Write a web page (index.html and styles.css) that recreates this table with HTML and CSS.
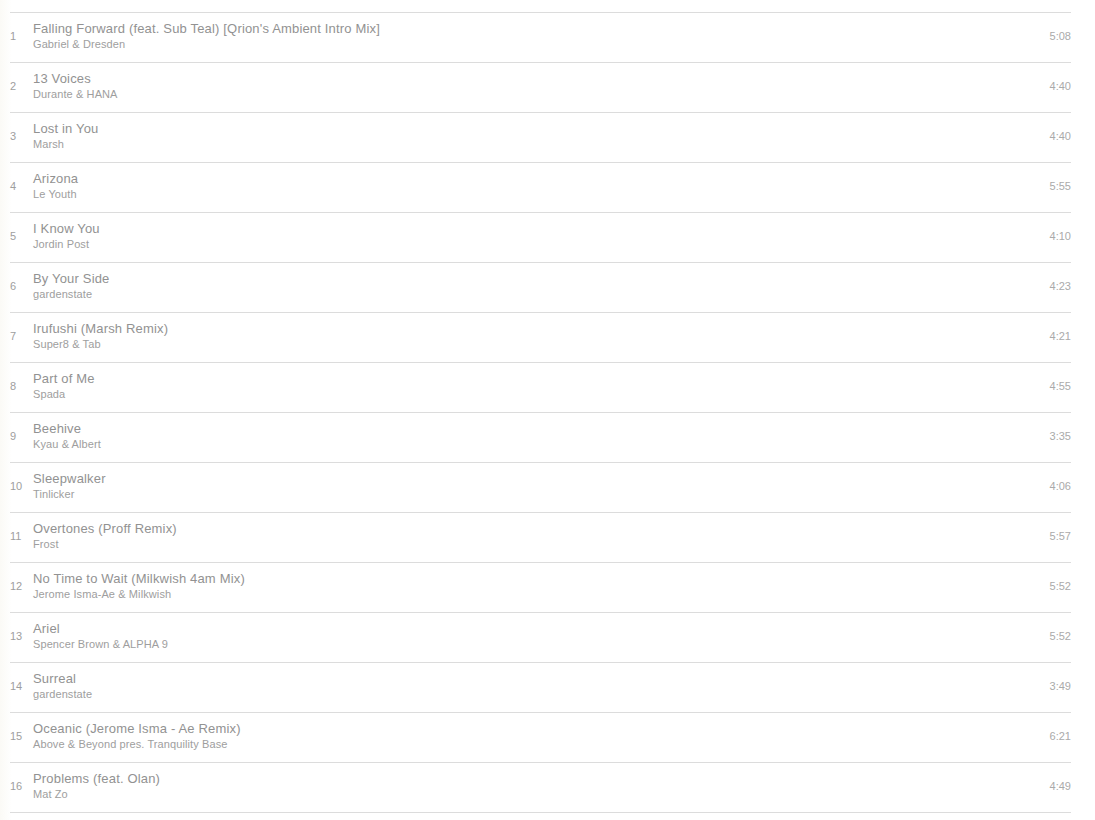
FILE: index.html
```html
<!DOCTYPE html>
<html lang="en">
	<head>
		<meta charset="UTF-8">
		<meta name="viewport" content="width=device-width, initial-scale=1.0">
		<title>tracklist</title>
		<link rel="stylesheet" href="styles.css">
	</head>
    <body>
        <ol class="tracks">
            <li class="track"><span class="num">1</span><div class="info"><div class="title">Falling Forward (feat. Sub Teal) [Qrion's Ambient Intro Mix]</div><div class="artist">Gabriel &amp; Dresden</div></div><span class="time">5:08</span></li>
            <li class="track"><span class="num">2</span><div class="info"><div class="title">13 Voices</div><div class="artist">Durante &amp; HANA</div></div><span class="time">4:40</span></li>
            <li class="track"><span class="num">3</span><div class="info"><div class="title">Lost in You</div><div class="artist">Marsh</div></div><span class="time">4:40</span></li>
            <li class="track"><span class="num">4</span><div class="info"><div class="title">Arizona</div><div class="artist">Le Youth</div></div><span class="time">5:55</span></li>
            <li class="track"><span class="num">5</span><div class="info"><div class="title">I Know You</div><div class="artist">Jordin Post</div></div><span class="time">4:10</span></li>
            <li class="track"><span class="num">6</span><div class="info"><div class="title">By Your Side</div><div class="artist">gardenstate</div></div><span class="time">4:23</span></li>
            <li class="track"><span class="num">7</span><div class="info"><div class="title">Irufushi (Marsh Remix)</div><div class="artist">Super8 &amp; Tab</div></div><span class="time">4:21</span></li>
            <li class="track"><span class="num">8</span><div class="info"><div class="title">Part of Me</div><div class="artist">Spada</div></div><span class="time">4:55</span></li>
            <li class="track"><span class="num">9</span><div class="info"><div class="title">Beehive</div><div class="artist">Kyau &amp; Albert</div></div><span class="time">3:35</span></li>
            <li class="track"><span class="num">10</span><div class="info"><div class="title">Sleepwalker</div><div class="artist">Tinlicker</div></div><span class="time">4:06</span></li>
            <li class="track"><span class="num">11</span><div class="info"><div class="title">Overtones (Proff Remix)</div><div class="artist">Frost</div></div><span class="time">5:57</span></li>
            <li class="track"><span class="num">12</span><div class="info"><div class="title">No Time to Wait (Milkwish 4am Mix)</div><div class="artist">Jerome Isma-Ae &amp; Milkwish</div></div><span class="time">5:52</span></li>
            <li class="track"><span class="num">13</span><div class="info"><div class="title">Ariel</div><div class="artist">Spencer Brown &amp; ALPHA 9</div></div><span class="time">5:52</span></li>
            <li class="track"><span class="num">14</span><div class="info"><div class="title">Surreal</div><div class="artist">gardenstate</div></div><span class="time">3:49</span></li>
            <li class="track"><span class="num">15</span><div class="info"><div class="title">Oceanic (Jerome Isma - Ae Remix)</div><div class="artist">Above &amp; Beyond pres. Tranquility Base</div></div><span class="time">6:21</span></li>
            <li class="track"><span class="num">16</span><div class="info"><div class="title">Problems (feat. Olan)</div><div class="artist">Mat Zo</div></div><span class="time">4:49</span></li>
        </ol>
    </body>
</html>
```

FILE: styles.css
```css
body{
    padding:0; margin:0; font-family:"Liberation Sans", Arial, sans-serif;
    background:linear-gradient(to right, #fbfaf6 0, #fff 12px);
}
.tracks{
    list-style:none; margin:12px 0 0 10px; padding:0;
    width:1061px; border-top:1px solid #dcdcdc;
}
.track{
    display:flex; align-items:center;
    height:49px; border-bottom:1px solid #dcdcdc;
}
.num{width:23px; padding-bottom:4px; font-size:11px; color:#9e9e9e;}
.info{flex:1; padding-bottom:3px;}
.title{font-size:13px; line-height:16px; letter-spacing:0.17px; color:#929292;}
.artist{font-size:11px; line-height:14px; letter-spacing:0.1px; color:#9e9e9e;}
.time{padding-bottom:4px; font-size:11px; color:#aaa;}
```
